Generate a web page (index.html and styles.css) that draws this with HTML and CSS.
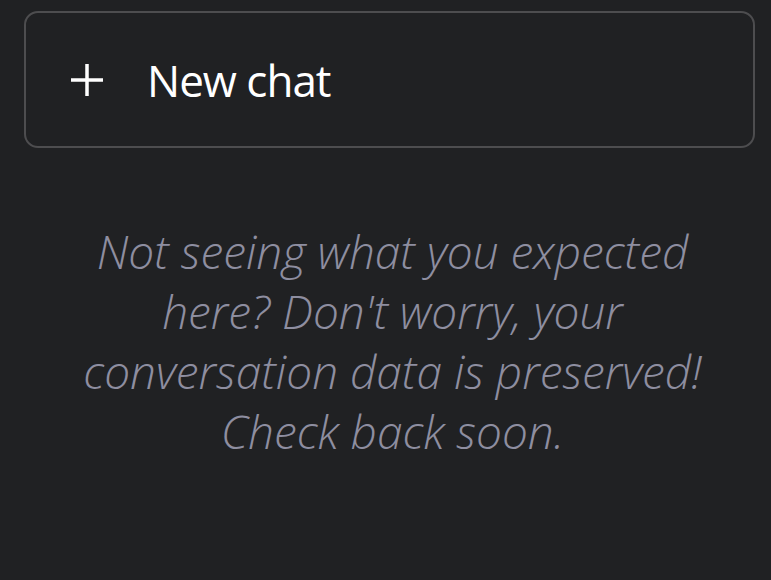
FILE: index.html
```html
<!DOCTYPE html>
<html>
<head>
<meta charset="utf-8">
<link rel="stylesheet" href="styles.css">
</head>
<body>
<div class="sidebar">
  <a class="new-chat" href="#">
    <svg class="plus" width="34" height="34" viewBox="0 0 34 34" aria-hidden="true">
      <path d="M17 1v32M1 17h32" stroke="#fff" stroke-width="3.5" fill="none"/>
    </svg>
    <span class="label">New chat</span>
  </a>
  <p class="empty">Not seeing what you expected here? Don't worry, your conversation data is preserved! Check back soon.</p>
</div>
</body>
</html>
```
FILE: styles.css
```css
html, body {
  margin: 0;
  padding: 0;
  background: #202123;
  height: 100%;
}
.sidebar {
  padding: 11px 16px 0 24px;
  font-family: "Open Sans", "Noto Sans", sans-serif;
}
.new-chat {
  box-sizing: border-box;
  display: flex;
  align-items: center;
  gap: 43px;
  height: 137px;
  padding-left: 44px;
  border: 2px solid #4d4d4f;
  border-radius: 14px;
  color: #fff;
  text-decoration: none;
}
.plus {
  flex: none;
}
.label {
  font-size: 44px;
  font-weight: 400;
  letter-spacing: -1px;
}
.empty {
  margin: 73px auto 0;
  width: 660px;
  padding-left: 6px;
  text-align: center;
  font-style: italic;
  font-weight: 300;
  font-size: 46px;
  line-height: 60px;
  color: #8e8ea0;
}
```
